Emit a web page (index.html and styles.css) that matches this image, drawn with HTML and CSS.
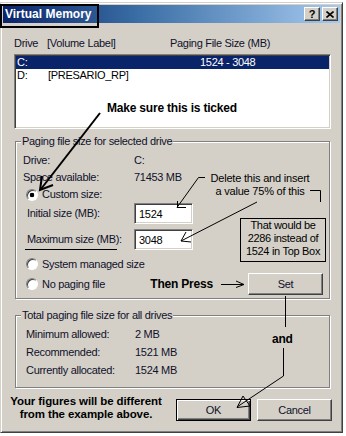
FILE: index.html
```html
<!DOCTYPE html>
<html lang="en">
<head>
  <meta charset="UTF-8" />
  <title>Virtual Memory</title>
  <link rel="stylesheet" href="styles.css">
</head>
<body>

<div class="page">
  <div class="window">
    <div class="titlebar">
      <span class="title">Virtual Memory</span>
      <span class="tb-buttons">
        <span class="tb-btn">?</span>
        <span class="tb-btn">
          <svg width="8" height="7" viewBox="0 0 8 7"><path d="M0.5 0.5 L7.5 6.5 M7.5 0.5 L0.5 6.5" stroke="#000" stroke-width="1.6"/></svg>
        </span>
      </span>
    </div>

    <div class="content">
      <div class="list-head">
        <span>Drive</span><span>[Volume Label]</span><span>Paging File Size (MB)</span>
      </div>
      <div class="listbox">
        <div class="drive selected"><span>C:</span><span></span><span>1524 - 3048</span></div>
        <div class="drive"><span>D:</span><span>[PRESARIO_RP]</span><span></span></div>
      </div>

      <div class="group group-drive">
        <div class="group-title">Paging file size for selected drive</div>
        <div class="info-row first"><span>Drive:</span><span>C:</span></div>
        <div class="info-row"><span>Space available:</span><span>71453 MB</span></div>
        <label class="radio-row"><span class="radio checked"></span>Custom size:</label>
        <div class="size-row"><span>Initial size (MB):</span><input class="field" value="1524"></div>
        <div class="size-row gap"><span>Maximum size (MB):</span><input class="field" value="3048"></div>
        <label class="radio-row system"><span class="radio"></span>System managed size</label>
        <div class="set-row">
          <label class="radio-row"><span class="radio"></span>No paging file</label>
          <span class="press">Then Press</span>
          <svg class="press-arrow" width="24" height="10" viewBox="0 0 24 10">
            <path d="M0 5.5 H23 M15 2 L23 5.5 L15 8.5" stroke="#000" fill="none"/>
          </svg>
          <button class="btn set">Set</button>
        </div>
      </div>

      <div class="group group-total">
        <div class="group-title">Total paging file size for all drives</div>
        <div class="total-row first"><span>Minimum allowed:</span><span>2 MB</span></div>
        <div class="total-row"><span>Recommended:</span><span>1521 MB</span></div>
        <div class="total-row"><span>Currently allocated:</span><span>1524 MB</span></div>
      </div>

      <div class="actions">
        <button class="btn default">OK</button>
        <button class="btn">Cancel</button>
      </div>
    </div>
  </div>

  <!-- hand drawn notes over the dialog -->
  <div class="title-mark"></div>
  <svg class="marks" width="346" height="436" viewBox="0 0 346 436">
    <g stroke="#000" fill="none">
      <path d="M100 113 L41 189" stroke-width="2"/>
      <path d="M53 185 L40 190 L42 176" stroke-width="2"/>
      <path d="M205 177.5 H198.5 L177 207.5 H186"/>
      <path d="M177.5 207.5 V201"/>
      <path d="M310 190.5 H320.5 V202"/>
      <path d="M257 202 L181 241"/>
      <path d="M191 242 L181 241 L186 232"/>
      <path d="M25 249.5 H117"/>
      <path d="M285.5 296 V327"/>
      <path d="M283.5 348 V376 L237 407"/>
      <path d="M237 407.5 L250 406 L243 396 Z"/>
    </g>
  </svg>
  <div class="note note-tick">Make sure this is ticked</div>
  <div class="note-plain note-delete">Delete this and insert<br>a value 75% of this</div>
  <div class="note-box">That would be<br>2286 instead of<br>1524 in Top Box</div>
  <div class="note note-and">and</div>
  <div class="note note-figures">Your figures will be different<br>from the example above.</div>
</div>

</body>
</html>
```

FILE: styles.css
```css
html, body {
  margin: 0;
  padding: 0;
  background: #fff;
}

.page {
  position: relative;
  width: 346px;
  height: 436px;
  overflow: hidden;
}

.window {
  margin-top: 2px;
  width: 343px;
  height: 431px;
  box-sizing: border-box;
  padding: 2px;
  background: #d4d0c8;
  border: 1px solid;
  border-color: #d4d0c8 #404040 #404040 #d4d0c8;
  box-shadow: inset 1px 1px #fff, inset -1px -1px #808080;
  font: 11px/13px "Liberation Sans", Arial, sans-serif;
  letter-spacing: -0.3px;
  color: #10102a;
}

/* title bar */
.titlebar {
  display: flex;
  align-items: center;
  height: 18px;
  padding: 0 2px;
  background: linear-gradient(90deg, #0a246a, #3a6ea5 40%, #a6caf0);
}

.title {
  color: #fff;
  font: bold 12px/18px "Liberation Sans", Arial, sans-serif;
  letter-spacing: 0;
}

.tb-buttons {
  display: flex;
  gap: 2px;
  margin-left: auto;
}

.tb-btn {
  display: flex;
  align-items: center;
  justify-content: center;
  width: 16px;
  height: 14px;
  box-sizing: border-box;
  background: #d4d0c8;
  border: 1px solid;
  border-color: #fff #404040 #404040 #fff;
  box-shadow: inset -1px -1px #808080;
  font: bold 11px/12px "Liberation Sans", Arial, sans-serif;
  color: #000;
}

/* body */
.content {
  padding: 14px 9px 0 11px;
}

.list-head {
  display: grid;
  grid-template-columns: 33px 123px 1fr;
  height: 13px;
}

.listbox {
  margin-top: 4px;
  height: 75px;
  box-sizing: border-box;
  background: #fff;
  border: 1px solid;
  border-color: #808080 #fff #fff #808080;
  box-shadow: inset 1px 1px #404040, inset -1px -1px #d4d0c8;
  padding: 1px;
  color: #000;
}

.drive {
  display: grid;
  grid-template-columns: 31px 152px 1fr;
  height: 13px;
  padding-left: 1px;
}

.drive.selected {
  background: #0a246a;
  color: #fff;
}

/* group boxes */
.group {
  margin: 12px 1px 0;
  border: 1px solid #808080;
  box-shadow: inset 1px 1px #fff, 1px 1px #fff;
}

.group-title {
  width: max-content;
  margin: -7px 0 0 5px;
  padding: 0 1px;
  background: #d4d0c8;
}

.group-drive {
  padding-bottom: 3px;
}

.group-total {
  margin-top: 16px;
  padding-bottom: 8px;
}

.info-row {
  display: grid;
  grid-template-columns: 111px 1fr;
  padding-left: 7px;
  line-height: 17px;
}

.info-row.first {
  margin-top: 4px;
}

.radio-row {
  display: flex;
  align-items: center;
  gap: 4px;
  height: 17px;
  padding-left: 10px;
}

.radio-row.system {
  height: 18px;
  margin-top: 5px;
}

.radio {
  width: 12px;
  height: 12px;
  box-sizing: border-box;
  border-radius: 50%;
  background: #fff;
  border: 1px solid;
  border-color: #808080 #fff #fff #808080;
  box-shadow: inset 1px 1px #404040;
}

.radio.checked {
  background: radial-gradient(circle, #000 2px, #fff 2.6px);
}

.size-row {
  display: grid;
  grid-template-columns: 107px 59px;
  align-items: center;
  height: 21px;
  padding-left: 11px;
}

.size-row.gap {
  margin-top: 5px;
}

.field {
  width: 59px;
  height: 21px;
  box-sizing: border-box;
  margin: 0;
  padding: 0 4px;
  font: inherit;
  letter-spacing: inherit;
  color: #000;
  background: #fff;
  border: 1px solid;
  border-color: #808080 #fff #fff #808080;
  box-shadow: inset 1px 1px #404040, inset -1px -1px #d4d0c8;
  outline: none;
}

.set-row {
  display: flex;
  align-items: center;
  height: 22px;
  padding-right: 6px;
}

.set-row .radio-row {
  padding-left: 10px;
}

.press {
  margin-left: auto;
  margin-right: 8px;
  font: bold 12px/14px "Liberation Sans", Arial, sans-serif;
  letter-spacing: -0.2px;
  color: #000;
}

.press-arrow {
  margin-right: 3px;
}

.total-row {
  display: grid;
  grid-template-columns: 109px 1fr;
  padding-left: 10px;
  line-height: 18px;
}

.total-row.first {
  margin-top: 3px;
}

/* buttons */
.btn {
  width: 75px;
  height: 22px;
  box-sizing: border-box;
  margin: 0;
  padding: 0;
  background: #d4d0c8;
  border: 1px solid;
  border-color: #fff #404040 #404040 #fff;
  box-shadow: inset -1px -1px #808080;
  font: inherit;
  letter-spacing: inherit;
  color: #10102a;
}

.btn.default {
  border: 1px solid #000;
  box-shadow: inset 1px 1px #fff, inset -1px -1px #404040, inset -2px -2px #808080;
}

.actions {
  display: flex;
  justify-content: flex-end;
  gap: 6px;
  margin: 11px -1px 0 0;
}

/* notes drawn over the screenshot */
.title-mark {
  position: absolute;
  left: 0;
  top: 4px;
  width: 99px;
  height: 24px;
  box-sizing: border-box;
  border: 2px solid #000;
}

.marks {
  position: absolute;
  left: 0;
  top: 0;
  pointer-events: none;
}

.note {
  position: absolute;
  font: bold 12px/14px "Liberation Sans", Arial, sans-serif;
  letter-spacing: -0.2px;
  color: #000;
  white-space: nowrap;
}

.note-tick {
  left: 107px;
  top: 101px;
}

.note-and {
  left: 272px;
  top: 332px;
}

.note-figures {
  left: 6px;
  top: 395px;
  width: 160px;
  font-size: 11.5px;
  line-height: 12.5px;
  letter-spacing: -0.1px;
  text-align: center;
}

.note-plain {
  position: absolute;
  font: 11px/13px "Liberation Sans", Arial, sans-serif;
  letter-spacing: -0.2px;
  color: #000;
}

.note-delete {
  left: 205px;
  top: 172px;
  width: 110px;
  text-align: center;
}

.note-box {
  position: absolute;
  left: 240px;
  top: 218px;
  width: 86px;
  box-sizing: border-box;
  padding: 0 0 3px;
  border: 1px solid #000;
  font: 11px/13px "Liberation Sans", Arial, sans-serif;
  letter-spacing: -0.3px;
  text-align: center;
  color: #000;
}
```
